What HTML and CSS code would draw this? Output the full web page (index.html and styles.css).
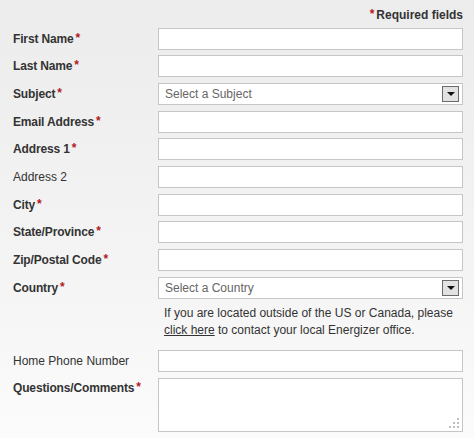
FILE: index.html
```html
<!DOCTYPE html>
<html lang="en">
<head>
    <meta charset="UTF-8">
    <title>Contact Us</title>
    <link rel="stylesheet" href="styles.css">
</head>
<body>

    <form class="contact-form">
        <div class="required-note"><span class="req">*</span>Required fields</div>

        <div class="form-row">
            <label class="field-label strong">First Name<span class="req">*</span></label>
            <input type="text" class="field-input">
        </div>
        <div class="form-row">
            <label class="field-label strong">Last Name<span class="req">*</span></label>
            <input type="text" class="field-input">
        </div>
        <div class="form-row">
            <label class="field-label strong">Subject<span class="req">*</span></label>
            <div class="fake-select">
                <span>Select a Subject</span>
                <span class="select-btn"></span>
            </div>
        </div>
        <div class="form-row">
            <label class="field-label strong">Email Address<span class="req">*</span></label>
            <input type="text" class="field-input">
        </div>
        <div class="form-row">
            <label class="field-label strong">Address 1<span class="req">*</span></label>
            <input type="text" class="field-input">
        </div>
        <div class="form-row">
            <label class="field-label">Address 2</label>
            <input type="text" class="field-input">
        </div>
        <div class="form-row">
            <label class="field-label strong">City<span class="req">*</span></label>
            <input type="text" class="field-input">
        </div>
        <div class="form-row">
            <label class="field-label strong">State/Province<span class="req">*</span></label>
            <input type="text" class="field-input">
        </div>
        <div class="form-row">
            <label class="field-label strong">Zip/Postal Code<span class="req">*</span></label>
            <input type="text" class="field-input">
        </div>
        <div class="form-row">
            <label class="field-label strong">Country<span class="req">*</span></label>
            <div class="fake-select">
                <span>Select a Country</span>
                <span class="select-btn"></span>
            </div>
        </div>
        <p class="country-note">If you are located outside of the US or Canada, please <a href="#">click here</a> to contact your local Energizer office.</p>

        <div class="form-row phone-row">
            <label class="field-label">Home Phone Number</label>
            <input type="text" class="field-input">
        </div>
        <div class="form-row top-row">
            <label class="field-label strong">Questions/Comments<span class="req">*</span></label>
            <div class="text-wrap">
                <textarea class="field-text"></textarea>
                <span class="grip"></span>
            </div>
        </div>
    </form>

</body>
</html>
```

FILE: styles.css
```css
* {
    margin: 0;
    padding: 0;
    box-sizing: border-box;
}

body {
    font-family: "Liberation Sans", Arial, sans-serif;
    font-size: 12px;
    color: #333;
    background: linear-gradient(to bottom, #ececec 0%, #f4f4f4 60%, #fbfbfb 100%);
    min-height: 438px;
}

.contact-form {
    width: 474px;
    padding: 8px 11px 0 13px;
    display: flex;
    flex-direction: column;
    gap: 5.67px;
}

.required-note {
    text-align: right;
    font-weight: bold;
    line-height: 14px;
}

.req {
    color: #b3191f;
    font-weight: bold;
    margin-left: 2px;
    position: relative;
    top: -1px;
}

.required-note .req {
    margin-left: 0;
    margin-right: 2px;
}

.form-row {
    display: flex;
    align-items: center;
}

.field-label {
    width: 145px;
    flex: none;
    color: #333;
}

    .field-label.strong {
        font-weight: bold;
        letter-spacing: -0.15px;
    }

.field-input {
    width: 305px;
    height: 22px;
    border: 1px solid #c6c6c6;
    background-color: #fff;
}

.fake-select {
    width: 305px;
    height: 22px;
    border: 1px solid #c6c6c6;
    background-color: #fff;
    display: flex;
    align-items: center;
    justify-content: space-between;
    padding: 0 3px 0 6px;
    color: #666;
}

.select-btn {
    width: 17px;
    height: 16px;
    border: 1px solid #6a6a6a;
    background-color: #e2e2e2;
    position: relative;
}

    .select-btn::after {
        content: "";
        position: absolute;
        left: 4px;
        top: 5px;
        border-left: 4px solid transparent;
        border-right: 4px solid transparent;
        border-top: 4px solid #111;
    }

.country-note {
    padding-left: 151px;
    line-height: 17px;
    margin-top: 1px;
    color: #333;
}

    .country-note a {
        color: #333;
        text-decoration: underline;
    }

.phone-row {
    margin-top: 5px;
}

.top-row {
    align-items: flex-start;
}

    .top-row .field-label {
        padding-top: 3px;
    }

.text-wrap {
    position: relative;
    width: 305px;
    height: 54px;
}

.field-text {
    display: block;
    width: 305px;
    height: 54px;
    border: 1px solid #c6c6c6;
    background-color: #fff;
    resize: none;
}

.grip {
    position: absolute;
    right: 4px;
    bottom: 4px;
    width: 10px;
    height: 10px;
    background:
        linear-gradient(#c0c0c0, #c0c0c0) 8px 0 / 2px 2px no-repeat,
        linear-gradient(#c0c0c0, #c0c0c0) 4px 4px / 2px 2px no-repeat,
        linear-gradient(#c0c0c0, #c0c0c0) 8px 4px / 2px 2px no-repeat,
        linear-gradient(#c0c0c0, #c0c0c0) 0 8px / 2px 2px no-repeat,
        linear-gradient(#c0c0c0, #c0c0c0) 4px 8px / 2px 2px no-repeat,
        linear-gradient(#c0c0c0, #c0c0c0) 8px 8px / 2px 2px no-repeat;
}
```
